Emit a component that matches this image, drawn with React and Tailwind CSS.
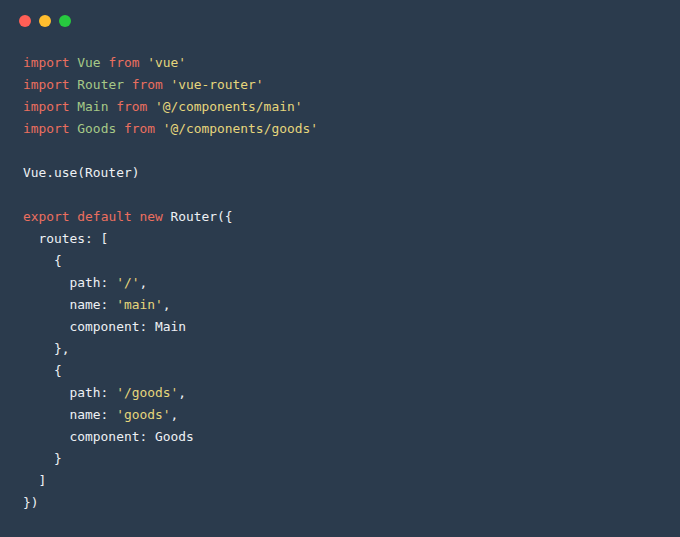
import React from "react";

const K = ({ children }) => <span className="text-[#ec6f5f]">{children}</span>;
const N = ({ children }) => <span className="text-[#a6c987]">{children}</span>;
const S = ({ children }) => <span className="text-[#e6d67c]">{children}</span>;

const lines = [
  <><K>import</K> <N>Vue</N> <K>from</K> <S>'vue'</S></>,
  <><K>import</K> <N>Router</N> <K>from</K> <S>'vue-router'</S></>,
  <><K>import</K> <N>Main</N> <K>from</K> <S>'@/components/main'</S></>,
  <><K>import</K> <N>Goods</N> <K>from</K> <S>'@/components/goods'</S></>,
  "",
  "Vue.use(Router)",
  "",
  <><K>export</K> <K>default</K> <K>new</K> Router({"{"}</>,
  "  routes: [",
  "    {",
  <>      path: <S>'/'</S>,</>,
  <>      name: <S>'main'</S>,</>,
  "      component: Main",
  "    },",
  "    {",
  <>      path: <S>'/goods'</S>,</>,
  <>      name: <S>'goods'</S>,</>,
  "      component: Goods",
  "    }",
  "  ]",
  "})",
];

const App = () => {
  return (
    <div className="w-[680px] h-[537px] bg-[#2b3b4d] overflow-hidden">
      <div className="flex gap-[8px] pt-[15px] pl-[19px]">
        <span className="w-[12px] h-[12px] rounded-full bg-[#ff5f56]"></span>
        <span className="w-[12px] h-[12px] rounded-full bg-[#ffbd2e]"></span>
        <span className="w-[12px] h-[12px] rounded-full bg-[#27c93f]"></span>
      </div>
      <pre
        className="mt-[25px] pl-[23px] text-[12.9px] leading-[22px] text-[#eef1f4]"
        style={{ fontFamily: '"DejaVu Sans Mono", monospace' }}
      >
        {lines.map((line, i) => (
          <div key={i} className="h-[22px] whitespace-pre">{line}</div>
        ))}
      </pre>
    </div>
  );
};

export default App;
